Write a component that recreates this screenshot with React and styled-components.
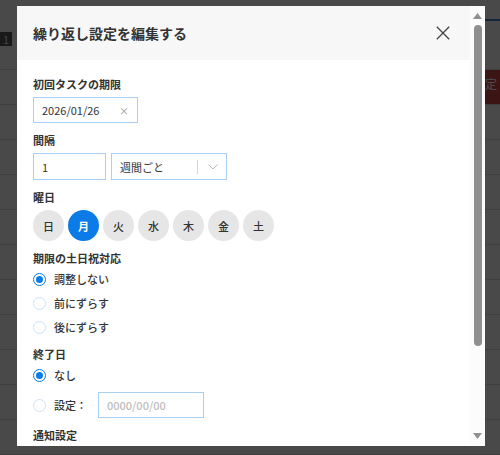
import React, { useState } from "react";
import styled, { createGlobalStyle } from "styled-components";

const GlobalStyle = createGlobalStyle`
  html, body {
    margin: 0;
    padding: 0;
    width: 500px;
    height: 455px;
    overflow: hidden;
    font-family: "Noto Sans CJK JP", "Noto Sans", sans-serif;
  }
`;

// --- the page behind the dialog ---

const Page = styled.div`
  width: 500px;
  height: 455px;
  background: #f6f6f6;
  display: flex;
  flex-direction: column;
`;

const TopBar = styled.div`
  height: 77px;
  border-bottom: 1px solid #d2d2d2;
  display: flex;
  flex-direction: column;
`;

const TopLine = styled.div`
  height: 19px;
  border-bottom: 2px solid #3f7fd0;
  margin-left: 485px;
`;

const TopRow = styled.div`
  display: flex;
  align-items: flex-start;
  justify-content: space-between;
  padding-top: 11px;
`;

const Badge = styled.span`
  background: #555;
  color: #ddd;
  font-size: 11px;
  padding: 0 3px;
  line-height: 14px;
`;

const SearchEdge = styled.span`
  width: 15px;
  height: 16px;
  border-left: 2px solid #3f7fd0;
  margin-top: 2px;
`;

const DangerButton = styled.span`
  background: #c94545;
  color: #fff;
  font-size: 12px;
  line-height: 28px;
  padding: 0 3px 0 6px;
  white-space: nowrap;
  flex: none;
`;

const Row = styled.div`
  height: 34px;
  border-bottom: 1px solid #d2d2d2;
  flex: none;
  display: flex;
  justify-content: flex-end;
  overflow: hidden;
`;

const Backdrop = styled.div`
  position: fixed;
  inset: 0;
  background: rgba(0, 0, 0, 0.7);
  display: flex;
  justify-content: center;
  align-items: flex-start;
  padding: 6px 0 0 2px;
`;

// --- dialog ---

const Modal = styled.div`
  width: 468px;
  height: 440px;
  background: #fff;
  display: flex;
  overflow: hidden;
`;

const ScrollArea = styled.div`
  flex: 1;
  min-width: 0;
  overflow: hidden;
`;

const ScrollBar = styled.div`
  width: 15px;
  flex: none;
  background: #fcfcfc;
  display: flex;
  flex-direction: column;
  align-items: center;
  padding: 3px 0 3px;
  box-sizing: border-box;
`;

const ScrollArrow = styled.svg`
  flex: none;
  width: 9px;
  height: 6px;
  margin: 4px 0;
`;

const ScrollTrack = styled.div`
  flex: 1;
  display: flex;
  flex-direction: column;
  align-items: center;
`;

const ScrollThumb = styled.div`
  width: 8px;
  height: ${(p) => p.$size}px;
  border-radius: 4px;
  background: #8f8f8f;
  margin-top: 2px;
`;

const Header = styled.div`
  height: 54px;
  background: #f7f7f7;
  display: flex;
  align-items: center;
  justify-content: space-between;
  padding: 0 20px 0 16px;
`;

const Title = styled.h2`
  margin: 0;
  font-size: 14px;
  font-weight: 700;
  color: #333;
`;

const CloseButton = styled.button`
  border: 0;
  background: none;
  padding: 0;
  width: 14px;
  height: 14px;
  display: flex;
  cursor: pointer;
`;

const Body = styled.div`
  padding: 15px 16px 20px;
  display: flex;
  flex-direction: column;
  gap: 8px;
`;

const Field = styled.div`
  display: flex;
  flex-direction: column;
  align-items: flex-start;
  margin-top: ${(p) => (p.$offset ? p.$offset : 0)}px;
`;

const Label = styled.div`
  font-size: 11px;
  line-height: 18px;
  font-weight: 700;
  color: #333;
  margin-bottom: ${(p) => (p.$tight ? "2px" : "4px")};
`;

const InputBox = styled.div`
  width: ${(p) => p.$width}px;
  height: ${(p) => (p.$tall ? 27 : 26)}px;
  box-sizing: border-box;
  border: 1px solid #a9cff5;
  display: flex;
  align-items: center;
  padding: 0 8px;
  font-size: 11px;
  color: ${(p) => (p.$placeholder ? "#bdbdbd" : "#333")};
  background: #fff;
`;

const ClearMark = styled.span`
  margin-left: auto;
  font-size: 10px;
  color: #999;
`;

const Inline = styled.div`
  display: flex;
  gap: 5px;
`;

const SelectSep = styled.span`
  margin-left: auto;
  width: 1px;
  height: 14px;
  background: #d4d4d4;
  margin-right: 10px;
`;

const Days = styled.div`
  display: flex;
  gap: 4px;
`;

const Day = styled.button`
  width: 31px;
  height: 31px;
  border-radius: 50%;
  border: 0;
  padding: 0;
  font-family: inherit;
  font-size: 11px;
  font-weight: ${(p) => (p.$active ? 700 : 500)};
  background: ${(p) => (p.$active ? "#0b7be8" : "#e6e6e6")};
  color: ${(p) => (p.$active ? "#fff" : "#333")};
  cursor: pointer;
`;

const RadioGroup = styled.div`
  display: flex;
  flex-direction: column;
  margin: -2px 0;
`;

const RadioRow = styled.label`
  display: flex;
  align-items: center;
  gap: 8px;
  height: 24px;
  font-size: 11px;
  color: #333;
  font-weight: 500;
  cursor: pointer;
  margin-top: ${(p) => (p.$spaced ? "6px" : "0")};
`;

const RadioDot = styled.span`
  width: 13px;
  height: 13px;
  box-sizing: border-box;
  border-radius: 50%;
  border: ${(p) => (p.$checked ? "1.5px solid #0b7be8" : "1px solid #cde2f7")};
  background: #fff;
  display: flex;
  align-items: center;
  justify-content: center;
  flex: none;

  &::after {
    content: "";
    width: 7px;
    height: 7px;
    border-radius: 50%;
    background: ${(p) => (p.$checked ? "#0b7be8" : "transparent")};
  }
`;

const RadioText = styled.span`
  min-width: ${(p) => (p.$min ? p.$min : 0)}px;
`;

const Radio = ({ checked, children, onClick, spaced }) => (
  <RadioRow $spaced={spaced} onClick={onClick}>
    <RadioDot $checked={checked} />
    {children}
  </RadioRow>
);

const DAYS = ["日", "月", "火", "水", "木", "金", "土"];

const App = () => {
  const [days, setDays] = useState([1]);
  const [adjust, setAdjust] = useState(0);
  const [end, setEnd] = useState(0);

  const toggleDay = (i) =>
    setDays((d) => (d.includes(i) ? d.filter((x) => x !== i) : [...d, i]));

  return (
    <>
      <GlobalStyle />
      <Page>
        <TopBar>
          <TopLine />
          <TopRow>
            <Badge>1</Badge>
            <SearchEdge />
          </TopRow>
        </TopBar>
        <Row>
          <DangerButton>設定</DangerButton>
        </Row>
        {Array.from({ length: 10 }).map((_, i) => (
          <Row key={i} />
        ))}
      </Page>
      <Backdrop>
        <Modal>
          <ScrollArea>
            <Header>
              <Title>繰り返し設定を編集する</Title>
              <CloseButton aria-label="閉じる">
                <svg width="14" height="14" viewBox="0 0 14 14">
                  <path
                    d="M0.8 0.8 L13.2 13.2 M13.2 0.8 L0.8 13.2"
                    stroke="#444"
                    strokeWidth="1.3"
                    fill="none"
                  />
                </svg>
              </CloseButton>
            </Header>
            <Body>
              <Field>
                <Label>初回タスクの期限</Label>
                <InputBox $width={105}>
                  2026/01/26
                  <ClearMark>×</ClearMark>
                </InputBox>
              </Field>

              <Field>
                <Label>間隔</Label>
                <Inline>
                  <InputBox $width={73} $tall>
                    1
                  </InputBox>
                  <InputBox $width={116} $tall>
                    週間ごと
                    <SelectSep />
                    <svg width="10" height="6" viewBox="0 0 10 6">
                      <path
                        d="M0.5 0.5 L5 5 L9.5 0.5"
                        stroke="#bbb"
                        strokeWidth="1"
                        fill="none"
                      />
                    </svg>
                  </InputBox>
                </Inline>
              </Field>

              <Field>
                <Label>曜日</Label>
                <Days>
                  {DAYS.map((d, i) => (
                    <Day
                      key={d}
                      $active={days.includes(i)}
                      onClick={() => toggleDay(i)}
                    >
                      {d}
                    </Day>
                  ))}
                </Days>
              </Field>

              <Field>
                <Label $tight>期限の土日祝対応</Label>
                <RadioGroup>
                  {["調整しない", "前にずらす", "後にずらす"].map((t, i) => (
                    <Radio
                      key={t}
                      checked={adjust === i}
                      onClick={() => setAdjust(i)}
                    >
                      {t}
                    </Radio>
                  ))}
                </RadioGroup>
              </Field>

              <Field>
                <Label $tight>終了日</Label>
                <RadioGroup>
                  <Radio checked={end === 0} onClick={() => setEnd(0)}>
                    なし
                  </Radio>
                  <Radio spaced checked={end === 1} onClick={() => setEnd(1)}>
                    <RadioText $min={36}>設定：</RadioText>
                    <InputBox $width={106} $placeholder>
                      0000/00/00
                    </InputBox>
                  </Radio>
                </RadioGroup>
              </Field>

              <Field $offset={3}>
                <Label $tight>通知設定</Label>
              </Field>
            </Body>
          </ScrollArea>
          <ScrollBar>
            <ScrollArrow viewBox="0 0 9 6">
              <path d="M4.5 0 L9 6 L0 6 Z" fill="#909090" />
            </ScrollArrow>
            <ScrollTrack>
              <ScrollThumb $size={321} />
            </ScrollTrack>
            <ScrollArrow viewBox="0 0 9 6">
              <path d="M0 0 L9 0 L4.5 6 Z" fill="#909090" />
            </ScrollArrow>
          </ScrollBar>
        </Modal>
      </Backdrop>
    </>
  );
};

export default App;
